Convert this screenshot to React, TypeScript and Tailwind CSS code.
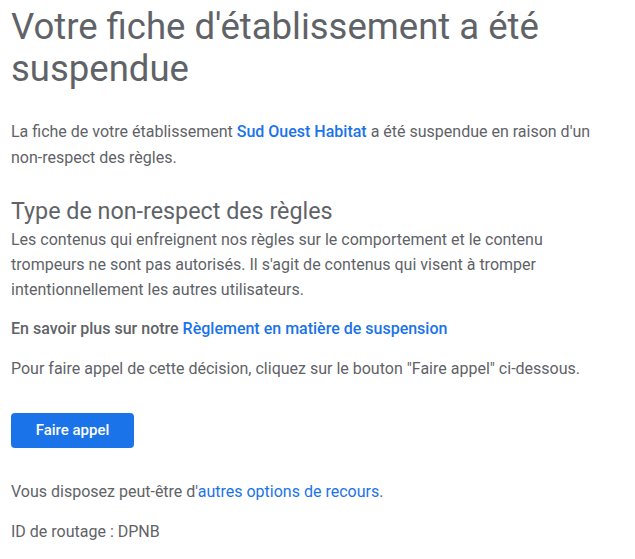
export default function App() {
  return (
    <div className="min-h-screen bg-white px-[11px] pt-[6px] font-['Roboto',sans-serif] text-[#5f6368]">
      <div className="max-w-[600px]">
        <h1 className="text-[36.5px] leading-[42px] font-normal text-[#5f6368]">
          Votre fiche d'établissement a été suspendue
        </h1>

        <p className="mt-[29px] text-[16px] leading-[26px]">
          La fiche de votre établissement{" "}
          <span className="font-medium text-[#1a73e8]">Sud Ouest Habitat</span>{" "}
          a été suspendue en raison d'un non-respect des règles.
        </p>

        <h2 className="mt-[26px] text-[23.3px] leading-[28px] font-normal text-[#5f6368]">
          Type de non-respect des règles
        </h2>
        <p className="mt-[2px] text-[16px] leading-[25px]">
          Les contenus qui enfreignent nos règles sur le comportement et le
          contenu trompeurs ne sont pas autorisés. Il s'agit de contenus qui
          visent à tromper intentionnellement les autres utilisateurs.
        </p>

        <p className="mt-[14px] text-[16px] leading-[26px] font-medium">
          En savoir plus sur notre{" "}
          <a href="#" className="text-[#1a73e8]">
            Règlement en matière de suspension
          </a>
        </p>

        <p className="mt-[14px] text-[16px] leading-[26px]">
          Pour faire appel de cette décision, cliquez sur le bouton "Faire
          appel" ci-dessous.
        </p>

        <button className="mt-[31px] h-[35px] w-[123px] rounded-[4px] bg-[#1a73e8] text-[15px] font-medium text-white">
          Faire appel
        </button>

        <p className="mt-[31px] text-[16px] leading-[26px]">
          Vous disposez peut-être d'
          <a href="#" className="text-[#1a73e8]">
            autres options de recours
          </a>
          .
        </p>

        <p className="mt-[14px] text-[16px] leading-[26px]">ID de routage : DPNB</p>
      </div>
    </div>
  );
}
